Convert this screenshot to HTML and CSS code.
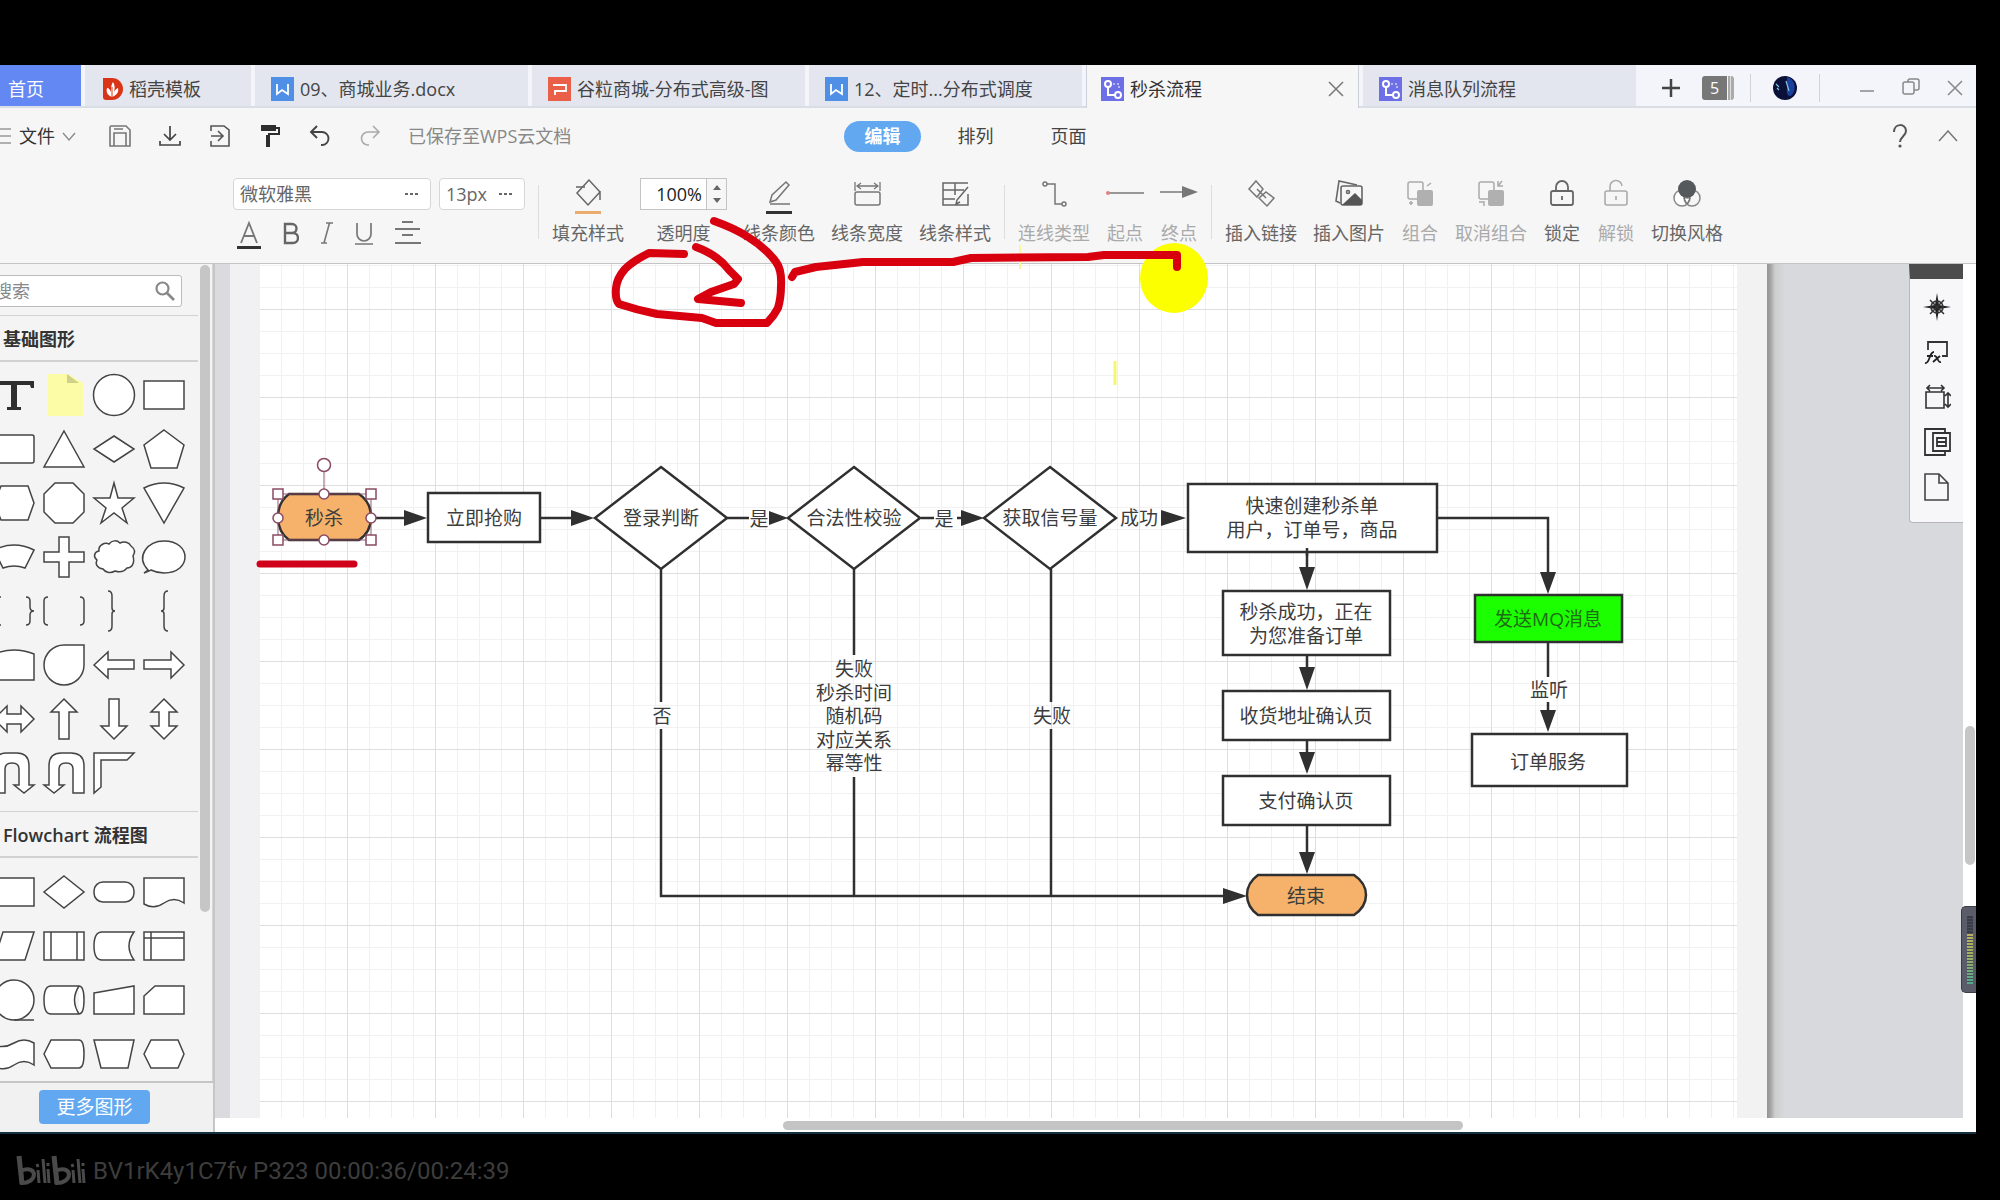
FILE: index.html
```html
<!DOCTYPE html>
<html lang="zh-CN">
<head>
<meta charset="utf-8">
<title>秒杀流程</title>
<link rel="stylesheet" href="styles.css">
</head>
<body>
<main class="app">
  <header class="tabs">
    <button class="tab tab-home">首页</button>
    <button class="tab tab-docer"><svg width="20" height="24" viewBox="0 0 20 24"><path d="M0 1h9a11 11 0 0 1 0 22H3a3 3 0 0 1-3-3z" fill="#d93418"/><path d="M9 20c-5-2-6-5-5-9 2 0 3 2 4 4 0-4 0-7 2-10 2 3 2 6 1 10 1-2 2-3 4-4 1 4-1 7-6 9z" fill="#fff"/><path d="M9 20V10" stroke="#d93418"/></svg>稻壳模板</button>
    <button class="tab"><svg width="23" height="24" viewBox="0 0 23 24"><path d="M0 0h23v24H0z" fill="#4f8fe6"/><path d="M6 7v10l5-4 6 4V7" fill="none" stroke="#fff" stroke-width="1.800"/></svg>09、商城业务.docx</button>
    <button class="tab"><svg width="23" height="24" viewBox="0 0 23 24"><path d="M0 0h23v24H0z" fill="#ea5f48"/><path d="M5 8h13v6H7v4" fill="none" stroke="#fff" stroke-width="1.800"/></svg>谷粒商城-分布式高级-图</button>
    <button class="tab"><svg width="23" height="24" viewBox="0 0 23 24"><path d="M0 0h23v24H0z" fill="#4f8fe6"/><path d="M6 7v10l5-4 6 4V7" fill="none" stroke="#fff" stroke-width="1.800"/></svg>12、定时...分布式调度</button>
    <button class="tab tab-active"><svg width="23" height="24" viewBox="0 0 23 24"><path d="M0 0h23v24H0z" fill="#6d6fe6"/><g fill="none" stroke="#fff" stroke-width="2"><circle cx="7" cy="7" r="3"/><circle cx="17" cy="18" r="3"/><path d="M7 10v8h7"/><path d="M12 7h6v6" stroke-dasharray="2 2" stroke-width="1"/></g></svg>秒杀流程<svg class="tab-close" width="16" height="16" viewBox="0 0 16 16"><path d="M1 1l14 14M15 1L1 15" fill="none" stroke="#777" stroke-width="1.5"/></svg></button>
    <button class="tab"><svg width="23" height="24" viewBox="0 0 23 24"><path d="M0 0h23v24H0z" fill="#6d6fe6"/><g fill="none" stroke="#fff" stroke-width="2"><circle cx="7" cy="7" r="3"/><circle cx="17" cy="18" r="3"/><path d="M7 10v8h7"/><path d="M12 7h6v6" stroke-dasharray="2 2" stroke-width="1"/></g></svg>消息队列流程</button>
    <div class="window-tools">
      <button class="plain" aria-label="新建"><svg width="18" height="18" viewBox="0 0 18 18"><path d="M9 0v18M0 9h18" stroke="#444" stroke-width="2.5"/></svg></button>
      <span class="badge">5</span>
      <span class="rule rule-near"></span>
      <svg width="24" height="24" viewBox="0 0 24 24"><circle cx="12" cy="12" r="12" fill="#0a1038"/><path d="M14 1c8 2 10 12 5 18-4 3-6-2-5-7z" fill="#1b3f9c"/><path d="M13 5l3 10M3 8l3 3M4 12l2 2" stroke="#7fc4dc" stroke-width="1.2"/></svg>
      <span class="rule"></span>
      <button class="plain win-min" aria-label="最小化"><svg width="16" height="18" viewBox="0 0 16 18"><path d="M1 12h14" stroke="#888" stroke-width="1.5"/></svg></button>
      <button class="plain win-key" aria-label="还原"><svg width="18" height="20" viewBox="0 0 18 20"><g fill="none" stroke="#888" stroke-width="1.5"><rect x="1" y="4" width="11" height="12" rx="2"/><path d="M6 4V3a2 2 0 0 1 2-2h7a2 2 0 0 1 2 2v7a2 2 0 0 1-2 2h-3"/></g></svg></button>
      <button class="plain win-key" aria-label="关闭"><svg width="16" height="16" viewBox="0 0 16 16"><path d="M1 1l14 14M15 1L1 15" stroke="#888" stroke-width="1.5"/></svg></button>
    </div>
  </header>

  <nav class="menubar">
    <div class="quick">
      <button class="plain file"><svg width="12" height="18" viewBox="0 0 12 18"><path d="M0 2h11M0 9h11M0 16h11" stroke="#999" stroke-width="1.5"/></svg>文件<svg width="14" height="9" viewBox="0 0 14 9"><path d="M1 1l6 7 6-7" fill="none" stroke="#888" stroke-width="1.3"/></svg></button>
      <div class="quick-icons">
        <svg width="22" height="22" viewBox="0 0 22 22"><g fill="none" stroke="#777" stroke-width="1.6"><path d="M2 1h15l4 4v16H1V2z"/><path d="M5 21V8h12v13M5 4h9"/></g></svg>
        <svg width="22" height="22" viewBox="0 0 22 22"><path d="M11 1v14M5 9l6 6 6-6M1 16v4h20v-4" fill="none" stroke="#444" stroke-width="1.7"/></svg>
        <svg width="22" height="22" viewBox="0 0 22 22"><path d="M2 6V1h13l5 4v16H2v-5M2 11h11M9 6l5 5-5 5" fill="none" stroke="#555" stroke-width="1.6"/></svg>
        <svg width="22" height="24" viewBox="0 0 22 24"><path d="M2 1h15v6H2z" fill="#2d2d2d"/><path d="M17 4h3v6H10v13" fill="none" stroke="#2d2d2d" stroke-width="2"/><path d="M7 11h4v12H7z" fill="#2d2d2d"/></svg>
        <svg width="22" height="22" viewBox="0 0 22 22"><path d="M8 1L2 7l6 6M2 7h11a6.500 6.500 0 0 1 0 13h-1" fill="none" stroke="#444" stroke-width="1.9"/></svg>
        <svg width="22" height="22" viewBox="0 0 22 22"><path d="M14 1l6 6-6 6M20 7H9a6.500 6.500 0 0 0 0 13h1" fill="none" stroke="#aaa" stroke-width="1.6"/></svg>
      </div>
      <span class="saved">已保存至WPS云文档</span>
    </div>
    <button class="pill pill-on">编辑</button>
    <button class="pill">排列</button>
    <button class="pill">页面</button>
    <div class="help">
      <button class="plain" aria-label="帮助"><svg width="16" height="26" viewBox="0 0 16 26"><path d="M2 9c0-9 12-9 12-1 0 5-6 6-6 11" fill="none" stroke="#555" stroke-width="2"/><circle cx="8" cy="23" r="1.600" fill="#555"/></svg></button>
      <button class="plain" aria-label="收起"><svg width="20" height="12" viewBox="0 0 20 12"><path d="M1 11l9-10 9 10" fill="none" stroke="#777" stroke-width="1.5"/></svg></button>
    </div>
  </nav>

  <section class="toolbar">
    <div class="font-tools">
      <div class="font-row">
        <button class="picker picker-font"><span>微软雅黑</span><svg width="14" height="4" viewBox="0 0 14 4"><path d="M1 1h3v2H1zM6 1h3v2H6zM11 1h3v2h-3z" fill="#666"/></svg></button>
        <button class="picker picker-size"><span>13px</span><svg width="14" height="4" viewBox="0 0 14 4"><path d="M1 1h3v2H1zM6 1h3v2H6zM11 1h3v2h-3z" fill="#666"/></svg></button>
      </div>
      <div class="font-row format-row">
        <svg width="24" height="30" viewBox="0 0 24 30"><path d="M4 22L12 2l8 20M7 15h10" fill="none" stroke="#777" stroke-width="1.8"/><path d="M0 25h24v3H0z" fill="#333"/></svg>
        <svg width="16" height="30" viewBox="0 0 16 30"><path d="M2 3h7a4.500 4.500 0 0 1 0 9H2zM2 12h8a5 5 0 0 1 0 10H2z" fill="none" stroke="#666" stroke-width="2.400"/></svg>
        <svg width="12" height="30" viewBox="0 0 12 30"><path d="M5 2h7M0 22h6M8.500 2L3 22" fill="none" stroke="#777" stroke-width="1.600"/></svg>
        <svg width="18" height="30" viewBox="0 0 18 30"><path d="M2 2v11a7 7 0 0 0 14 0V2M0 23h18" fill="none" stroke="#777" stroke-width="1.700"/></svg>
        <svg width="26" height="30" viewBox="0 0 26 30"><path d="M7 1h11M0 8h25M7 14h11M0 22h26" fill="none" stroke="#777" stroke-width="1.800"/></svg>
      </div>
    </div>
    <span class="split"></span>
    <button class="tool"><svg width="30" height="36" viewBox="0 0 30 36"><path d="M16 2L4 15l11 12 12-13zM3 9h9M27 13v9" fill="none" stroke="#666" stroke-width="1.500"/><path d="M2 33h26v3H2z" fill="#e9ac6c"/></svg>填充样式</button>
    <div class="tool opacity"><div class="spin"><input id="opacity" type="text" value="100%"><span class="spin-keys"><svg width="8" height="18" viewBox="0 0 8 18"><path d="M0 5l4-5 4 5zM0 13l4 5 4-5z" fill="#666"/></svg></span></div><label for="opacity">透明度</label></div>
    <button class="tool"><svg width="30" height="36" viewBox="0 0 30 36"><path d="M6 24l2-7L22 4l3 3-13 15zM6 26h20" fill="none" stroke="#777" stroke-width="1.500"/><path d="M2 33h26v3H2z" fill="#333"/></svg>线条颜色</button>
    <button class="tool"><svg width="30" height="36" viewBox="0 0 30 36"><rect x="3" y="14" width="25" height="13" rx="2" fill="none" stroke="#777" stroke-width="1.500"/><path d="M3 4v9M28 4v9M5 8h21M9 5L5 8l4 3M22 5l4 3-4 3" fill="none" stroke="#777" stroke-width="1.300"/></svg>线条宽度</button>
    <button class="tool"><svg width="30" height="36" viewBox="0 0 30 36"><path d="M28 5H3v22h25V16M3 12h21M3 21h12M15 5v12M28 9L17 22l-1 4 4-2" fill="none" stroke="#666" stroke-width="1.500"/></svg>线条样式</button>
    <span class="split"></span>
    <button class="tool dim" disabled><svg width="30" height="36" viewBox="0 0 30 36"><g fill="none" stroke="#777" stroke-width="1.500"><circle cx="6" cy="6" r="2"/><circle cx="25" cy="26" r="2"/><path d="M8 6h8v20h7"/></g></svg>连线类型</button>
    <button class="tool dim" disabled><svg width="38" height="36" viewBox="0 0 38 36"><path d="M1 15h37" stroke="#777" stroke-width="1.500"/><circle cx="2" cy="15" r="2" fill="#e08080"/></svg>起点</button>
    <button class="tool dim" disabled><svg width="38" height="36" viewBox="0 0 38 36"><path d="M0 14h24" stroke="#777" stroke-width="1.500"/><path d="M22 8l16 6-16 6z" fill="#777"/></svg>终点</button>
    <span class="split"></span>
    <button class="tool"><svg width="30" height="36" viewBox="0 0 30 36"><g fill="none" stroke="#777" stroke-width="1.500"><path d="M10 3l7 8-6 8-8-8zM20 14l8 6-7 8-8-8zM11 11l9 9"/></g></svg>插入链接</button>
    <button class="tool"><svg width="30" height="36" viewBox="0 0 30 36"><g fill="none" stroke="#666" stroke-width="1.600"><path d="M6 25l-4-2L5 3l18 4"/><rect x="7" y="8" width="21" height="19" rx="2"/><circle cx="14" cy="14" r="1.500"/></g><path d="M8 27l13-12 7 7v5z" fill="#555"/></svg>插入图片</button>
    <button class="tool dim" disabled><svg width="30" height="36" viewBox="0 0 30 36"><rect x="3" y="4" width="15" height="17" rx="2" fill="none" stroke="#aaa" stroke-width="1.500"/><rect x="12" y="12" width="16" height="16" rx="2" fill="#b0b0b0"/><path d="M22 8l4-3M6 23v4M4 25h4" stroke="#aaa" stroke-width="1.500"/></svg>组合</button>
    <button class="tool dim" disabled><svg width="30" height="36" viewBox="0 0 30 36"><rect x="3" y="4" width="15" height="17" rx="2" fill="none" stroke="#aaa" stroke-width="1.500"/><rect x="12" y="12" width="16" height="16" rx="2" fill="#b0b0b0"/><path d="M22 3v5h5M26 3l-4 5M3 24h5v4" fill="none" stroke="#aaa" stroke-width="1.500"/></svg>取消组合</button>
    <button class="tool"><svg width="30" height="36" viewBox="0 0 30 36"><g fill="none" stroke="#666" stroke-width="1.800"><rect x="4" y="13" width="22" height="14" rx="2"/><path d="M9 13V9a6 6 0 0 1 12 0v4M15 18v4"/></g></svg>锁定</button>
    <button class="tool dim" disabled><svg width="30" height="36" viewBox="0 0 30 36"><g fill="none" stroke="#aaa" stroke-width="1.600"><rect x="4" y="13" width="22" height="14" rx="2"/><path d="M9 13V9a6 6 0 0 1 12-1M15 18v4"/></g></svg>解锁</button>
    <button class="tool"><svg width="30" height="36" viewBox="0 0 30 36"><g fill="#fff" stroke="#888" stroke-width="1.500"><circle cx="10" cy="20" r="8"/><circle cx="20" cy="20" r="8" fill-opacity="0"/></g><circle cx="15" cy="11" r="9" fill="#56595c"/><path d="M12 20l3 6 3-6z" fill="#fff" stroke="#666"/></svg>切换风格</button>
  </section>

  <div class="workspace">
    <aside class="sidebar">
      <div class="shelf">
        <div class="search"><input type="text" placeholder="搜索" aria-label="搜索"><svg width="20" height="20" viewBox="0 0 20 20"><circle cx="7.500" cy="7.500" r="6" fill="none" stroke="#888" stroke-width="2.200"/><path d="M12 12l7 7" stroke="#888" stroke-width="2.600"/></svg></div>
        <h2>基础图形</h2>
        <div class="shapes">
          <svg viewBox="0 0 42 42"><path d="M2 7h39v7h-3l-1-3H24v22h4v3H14v-3h4V11H2z" class="ink"/></svg>
          <svg viewBox="0 0 42 42"><path d="M5 0h20l15 9v33H5z" fill="#fcfca6"/><path d="M24 0v9h12z" fill="#cfd08a"/></svg>
          <svg viewBox="0 0 42 42"><circle cx="21" cy="21" r="20.500"/></svg>
          <svg viewBox="0 0 42 42"><path d="M1 7h40v28H1z"/></svg>
          <svg viewBox="0 0 42 42"><rect x="1" y="7" width="40" height="28" rx="2"/></svg>
          <svg viewBox="0 0 42 42"><path d="M21 3l20 36H1z"/></svg>
          <svg viewBox="0 0 42 42"><path d="M21 8l20 13-20 13L1 21z"/></svg>
          <svg viewBox="0 0 42 42"><path d="M21 2l20 15-7 23H8L1 17z"/></svg>
          <svg viewBox="0 0 42 42"><path d="M8 4h27l6 17-6 17H8L1 21z"/></svg>
          <svg viewBox="0 0 42 42"><path d="M12 1h18l11 11v18L30 41H12L1 30V12z"/></svg>
          <svg viewBox="0 0 42 42"><path d="M21 1l4 15h16L29 26l5 15-13-10L8 41l5-15L1 16h16z"/></svg>
          <svg viewBox="0 0 42 42"><path d="M1 6q20-10 40 0L21 41z"/></svg>
          <svg viewBox="0 0 42 42"><path d="M1 14q20-10 40 0l-9 18q-11-4-22 0z"/></svg>
          <svg viewBox="0 0 42 42"><path d="M16 1h10v15h15v10H26v15H16V26H1V16h15z"/></svg>
          <svg viewBox="0 0 42 42"><path d="M6 15c-1-6 6-9 10-7 3-4 8-4 11-1 4-2 9-1 11 3 4 3 4 7 2 10 2 7-1 12-6 12-4 5-9 4-12 3-5 3-10 1-12-2-6-1-8-5-6-9-4-3-3-8 2-9z"/></svg>
          <svg viewBox="0 0 42 42"><path d="M1 37l4-3c-13-14 0-29 16-29 28 0 28 32 0 32-6 0-9-1-13-3z"/></svg>
          <svg viewBox="0 0 42 42" class="open"><path d="M8 7q-4 0-4 4v6q0 4-3 4 3 0 3 4v6q0 4 4 4M33 7q4 0 4 4v6q0 4 4 4-4 0-4 4v6q0 4-4 4"/></svg>
          <svg viewBox="0 0 42 42" class="open"><path d="M5 7q-4 0-4 4v20q0 4 4 4M37 7q4 0 4 4v20q0 4-4 4"/></svg>
          <svg viewBox="0 0 42 42" class="open"><path d="M15 1q4 0 4 5v12q0 3 3 3-3 0-3 3v12q0 5-4 5"/></svg>
          <svg viewBox="0 0 42 42" class="open"><path d="M25 1q-4 0-4 5v12q0 3-3 3 3 0 3 3v12q0 5 4 5"/></svg>
          <svg viewBox="0 0 42 42"><path d="M1 10q20-8 40 0v26H1z"/></svg>
          <svg viewBox="0 0 42 42"><path d="M21 1h20v20A20 20 0 1 1 21 1z"/></svg>
          <svg viewBox="0 0 42 42"><path d="M1 21L15 8v8h26v9H15v9z"/></svg>
          <svg viewBox="0 0 42 42"><path d="M41 21L28 8v8H1v9h27v9z"/></svg>
          <svg viewBox="0 0 42 42"><path d="M1 21L14 8v8h14V8l13 13-13 13v-8H14v8z"/></svg>
          <svg viewBox="0 0 42 42"><path d="M21 1l13 13h-8v27H16V14H8z"/></svg>
          <svg viewBox="0 0 42 42"><path d="M21 41l13-13h-8V1H16v27H8z"/></svg>
          <svg viewBox="0 0 42 42"><path d="M21 1l13 13h-8v14h8L21 41 8 28h8V14H8z"/></svg>
          <svg viewBox="0 0 42 42"><path d="M1 41V14Q1 1 14 1h10q12 0 12 13v19h5l-10 8-10-8h5V17q0-6-7-6t-7 6v24z"/></svg>
          <svg viewBox="0 0 42 42"><path d="M41 41V14Q41 1 28 1H18Q6 1 6 14v19H1l10 8 10-8h-5V17q0-6 7-6t7 6v24z"/></svg>
          <svg viewBox="0 0 42 42"><path d="M1 1h40l-7 7H8v27l-7 6z"/></svg>
        </div>
        <h2>Flowchart 流程图</h2>
        <div class="shapes shapes-flow">
          <svg viewBox="0 0 42 42"><path d="M1 7h40v28H1z"/></svg>
          <svg viewBox="0 0 42 42"><path d="M21 5l20 16-20 16L1 21z"/></svg>
          <svg viewBox="0 0 42 42"><rect x="1" y="11" width="40" height="20" rx="9"/></svg>
          <svg viewBox="0 0 42 42"><path d="M1 7h40v25q-10-7-20 0t-20 1z"/></svg>
          <svg viewBox="0 0 42 42"><path d="M10 7h31l-9 28H1z"/></svg>
          <svg viewBox="0 0 42 42"><path d="M1 7h40v28H1zM8 7v28M34 7v28"/></svg>
          <svg viewBox="0 0 42 42"><path d="M41 7q-10 14 0 28H9Q1 35 1 21T9 7z"/></svg>
          <svg viewBox="0 0 42 42"><path d="M1 7h40v28H1zM8 7v28M1 13h40"/></svg>
          <svg viewBox="0 0 42 42"><circle cx="21" cy="21" r="20"/><path d="M21 41h20"/></svg>
          <svg viewBox="0 0 42 42"><path d="M8 7h28q5 0 5 14t-5 14H8Q1 35 1 21T8 7zM36 7q-9 14 0 28"/></svg>
          <svg viewBox="0 0 42 42"><path d="M1 14l40-7v28H1z"/></svg>
          <svg viewBox="0 0 42 42"><path d="M12 7h29v28H1V17z"/></svg>
          <svg viewBox="0 0 42 42"><path d="M1 12q10 4 20-2t20 0v22q-10-7-20 0t-20 1z"/></svg>
          <svg viewBox="0 0 42 42"><path d="M8 7h28q5 0 5 14t-5 14H8L1 21z"/></svg>
          <svg viewBox="0 0 42 42"><path d="M1 7h40l-6 28H8z"/></svg>
          <svg viewBox="0 0 42 42"><path d="M8 7h27l6 14-6 14H8L1 21z"/></svg>
        </div>
        <span class="shelf-thumb"></span>
      </div>
      <div class="more"><button>更多图形</button></div>
    </aside>

    <section class="stage">
      <div class="board">
        <div class="edge-left"></div>
        <div class="page">
          <svg class="diagram" width="1477" height="854" viewBox="260 264 1477 854">
            <g class="wire">
              <path d="M371 518h34M540 518h32M727 518h22M921 518h13M957 518h6M1437 518h111v55M1307 548v20M1307 655v13M1307 740v13M1307 825v28"/>
              <path d="M661 569v133M661 729v167h563M854 569v86M854 777v119M1051 569v133M1051 729v167M1548 642v35M1548 702v10"/>
            </g>
            <g class="head">
              <path d="M404 510l23 8-23 8zM571 510l23 8-23 8zM769 511l19 7-19 7zM961 510l23 8-23 8zM1161 510l25 8-25 8zM1223 888l24 8-24 8z"/>
              <path d="M1299 567h16l-8 23zM1299 667h16l-8 23zM1299 752h16l-8 22zM1299 852h16l-8 22zM1540 572h16l-8 22zM1540 710h16l-8 22z"/>
            </g>
            <g class="node">
              <rect x="428" y="493" width="112" height="49"/>
              <path d="M661 467l66 51-66 51-66-51zM854 467l66 51-66 51-66-51zM1050 467l66 51-66 51-66-51z"/>
              <rect x="1188" y="484" width="249" height="68"/>
              <rect x="1223" y="591" width="167" height="64"/>
              <rect x="1223" y="691" width="167" height="49"/>
              <rect x="1223" y="776" width="167" height="49"/>
              <rect x="1475" y="595" width="147" height="47" class="green"/>
              <rect x="1472" y="734" width="155" height="52"/>
              <path class="orange" d="M1258 875h96q12 8 12 20t-12 20h-96q-11-8-11-20t11-20z"/>
              <path class="orange" d="M289 494h70q12 8 12 23t-12 23h-70q-11-8-11-23t11-23z"/>
            </g>
            <path class="wire" d="M1307 548v8"/>
            <g class="handle">
              <path d="M324 471v18M278 494h93v46h-93z" fill="none" stroke-opacity=".6"/>
              <path d="M273 489h10v10h-10zM366 489h10v10h-10zM273 535h10v10h-10zM366 535h10v10h-10z"/>
              <circle cx="324" cy="465" r="6.500"/><circle cx="324" cy="494" r="5"/><circle cx="324" cy="540" r="5"/><circle cx="278" cy="518" r="5"/><circle cx="371" cy="518" r="5"/>
            </g>
            <g class="caption">
              <text x="324" y="525">秒杀</text><text x="484" y="525">立即抢购</text><text x="661" y="525">登录判断</text><text x="759" y="526">是</text>
              <text x="854" y="525">合法性校验</text><text x="944" y="526">是</text><text x="1050" y="525">获取信号量</text><text x="1139" y="525">成功</text>
              <text x="1312" y="513">快速创建秒杀单</text><text x="1312" y="537">用户，订单号，商品</text>
              <text x="1306" y="619">秒杀成功，正在</text><text x="1306" y="643">为您准备订单</text>
              <text x="1306" y="723">收货地址确认页</text><text x="1306" y="808">支付确认页</text><text x="1306" y="903">结束</text>
              <text x="1548" y="626" class="on-green">发送MQ消息</text><text x="1549" y="697">监听</text><text x="1548" y="769">订单服务</text>
              <text x="662" y="723">否</text><text x="1052" y="723">失败</text>
              <text x="854" y="676">失败</text><text x="854" y="700">秒杀时间</text><text x="854" y="723">随机码</text><text x="854" y="747">对应关系</text><text x="854" y="770">幂等性</text>
            </g>
            <path d="M260 564h94" stroke="#d0021b" stroke-width="7" stroke-linecap="round"/>
          </svg>
        </div>
        <div class="edge-right"></div>
        <div class="desk"></div>
        <div class="gutter"><span class="v-thumb"></span></div>
      </div>
      <div class="track"><span class="h-thumb"></span></div>
      <div class="dock">
        <svg width="28" height="28" viewBox="0 0 28 28"><path d="M14 0l2 12 12 2-12 2-2 12-2-12-12-2 12-2z" fill="#222"/><circle cx="14" cy="14" r="6" fill="none" stroke="#333" stroke-width="1.600"/><path d="M7 7l14 14M21 7L7 21" stroke="#333" stroke-width="1.500"/></svg>
        <svg width="28" height="28" viewBox="0 0 28 28"><path d="M5 12V4h19v14h-5" fill="none" stroke="#333" stroke-width="1.800"/><path d="M2 25c5 1 4-11 9-11M4 18h6M11 18c4-1 3 7 7 6M17 18l-7 6" fill="none" stroke="#222" stroke-width="1.800"/></svg>
        <svg width="28" height="28" viewBox="0 0 28 28"><path d="M3 9h18v16H3zM4 5h17M7 2L4 5l3 3M18 2l3 3-3 3M25 10v14M22 13l3-3 3 3M22 21l3 3 3-3" fill="none" stroke="#333" stroke-width="1.600"/></svg>
        <svg width="28" height="28" viewBox="0 0 28 28"><path d="M22 5V1H2v26h20v-4M10 5h17v18H10zM14 10h9v8h-9zM14 14h9" fill="none" stroke="#333" stroke-width="1.800"/></svg>
        <svg width="28" height="28" viewBox="0 0 28 28"><path d="M2 1h14l9 9v17H2zM16 1v9h9" fill="none" stroke="#444" stroke-width="1.600"/></svg>
      </div>
      <div class="meter"><span></span></div>
    </section>
  </div>

  <svg class="ink-layer" width="640" height="220" viewBox="600 200 640 220">
    <ellipse cx="1174" cy="278" rx="34" ry="35" fill="#fbff00"/>
    <path d="M1115 361v24" stroke="#f4f870" stroke-width="3"/><path d="M1020 245v24" stroke="#f8f8a0" stroke-width="2"/>
    <g fill="none" stroke="#d8000f" stroke-width="8" stroke-linecap="round" stroke-linejoin="round">
      <path d="M714 221q20 7 34 16 19 12 28 25 6 8 5 24 0 12-3 22-4 8-11 15h-51l-14-5-45-4q-20-4-38-10-4-4-3-16 1-10 9-19 8-8 24-16l35 1"/>
      <path d="M696 247q22 8 33 23l9 9-4 5-23 8-13 7 43 4"/>
      <path d="M792 277l3-5 21-5 47-5h90l18-4 117-1 16-2h73v12"/>
    </g>
  </svg>
</main>

<footer class="watermark">
  <svg width="70" height="34" viewBox="0 0 70 34" role="img" aria-label="bilibili">
    <g fill="none" stroke="#4a4a4a">
      <path d="M3 2l3 28" stroke-width="5"/><path d="M5 17c6-3 12-2 13 3 0 6-6 9-12 9z" stroke-width="4"/>
      <path d="M22 16l1 13M27 5l2 24M32 15l1 14M21 10l1 3M32 9v3" stroke-width="3"/>
      <path d="M38 2l3 28" stroke-width="5"/><path d="M40 17c6-3 12-2 13 3 0 6-6 9-12 9z" stroke-width="4"/>
      <path d="M57 16l1 13M62 5l2 24M67 15l1 14M56 10l1 3M67 9v3" stroke-width="3"/>
    </g>
  </svg>
  <span>BV1rK4y1C7fv P323 00:00:36/00:24:39</span>
</footer>
</body>
</html>
```
FILE: styles.css
```css
* { box-sizing: border-box; }

body {
  margin: 0;
  min-height: 100vh;
  padding-top: 65px;
  display: flex;
  flex-direction: column;
  background: #000;
  color: #444;
  font: 18px/24px "Open Sans", "Noto Sans CJK SC", sans-serif;
  overflow-x: hidden;
}

svg { display: block; flex: none; }
button, input { font: inherit; color: inherit; }
button { border: 0; padding: 0; background: none; white-space: nowrap; }

.app {
  position: relative;
  flex: 1;
  display: flex;
  flex-direction: column;
  margin-right: 24px;
  background: #f6f6f6;
  border-bottom: 2px solid #16303f;
}

/* document tabs */
.tabs {
  display: flex;
  gap: 4px;
  height: 43px;
  background: #f3f5fa;
  border-bottom: 2px solid #d9dde6;
}
.tab {
  flex: 0 1 273px;
  display: flex;
  align-items: center;
  gap: 6px;
  padding: 6px 16px 0;
  background: #e3e6ef;
}
.tab-home { flex-basis: 81px; padding-left: 8px; background: #6388f3; color: #fff; }
.tab-docer { flex-basis: 166px; padding-left: 18px; }
.tab-active {
  margin-bottom: -2px;
  padding: 6px 14px 2px;
  border-left: 1px solid #ccd0da;
  border-right: 1px solid #ccd0da;
  background: #f6f6f6;
  color: #333;
}
.tab-close { margin-left: auto; }

.window-tools {
  flex: 1;
  display: flex;
  align-items: center;
  justify-content: flex-end;
  gap: 22px;
  padding: 4px 13px 0 0;
}
.plain { display: flex; align-items: center; }
.badge {
  width: 32px;
  height: 24px;
  padding-left: 8px;
  background: linear-gradient(90deg, #777 25px, #f3f5fa 25px 26px, #aaa 26px 28px, #ddd 28px 29px, #aaa 29px);
  border-radius: 3px;
  color: #fff;
  font-size: 16px;
}
.rule { width: 1px; height: 28px; background: #d0d3da; }
.rule-near { margin-left: -6px; }
.win-min { margin-left: 17px; }
.win-key { margin-left: 5px; }

/* menu line */
.menubar { display: flex; align-items: center; height: 56px; }
.quick { display: flex; align-items: center; width: 844px; color: #333; }
.file { gap: 7px; width: 109px; }
.quick-icons { display: flex; align-items: center; gap: 28px; }
.saved { margin-left: 27px; color: #888; }
.pill { width: 77px; height: 31px; margin-right: 16px; border-radius: 16px; color: #444; }
.pill-on { background: #62a8f0; color: #fff; font-weight: 600; }
.help { display: flex; align-items: center; gap: 30px; margin-left: auto; padding-right: 18px; }

/* tool ribbon */
.toolbar {
  display: flex;
  align-items: flex-start;
  gap: 16px;
  height: 100px;
  padding: 14px 0 0 233px;
  border-bottom: 1px solid #c4c4c4;
  color: #666;
}
.font-row { display: flex; gap: 8px; }
.format-row { gap: 22px; padding: 11px 0 0 4px; }
.picker {
  display: flex;
  align-items: center;
  justify-content: space-between;
  height: 32px;
  padding: 0 12px 0 6px;
  background: #fff;
  border: 1px solid #d6d6d6;
  border-radius: 4px;
}
.picker-font { width: 198px; }
.picker-size { width: 86px; }
.split { width: 1px; height: 54px; margin: 7px -3px 0; background: #ddd; }
.tool {
  display: flex;
  flex-direction: column;
  align-items: center;
  gap: 7px;
  min-width: 38px;
}
.dim { color: #aaa; }
.opacity { width: 87px; }
.spin { display: flex; height: 36px; padding-bottom: 4px; }
.spin input {
  width: 67px;
  height: 32px;
  padding: 0 4px 0 0;
  border: 1px solid #c4c4c4;
  background: #fff;
  color: #222;
  text-align: right;
}
.spin-keys {
  display: flex;
  align-items: center;
  justify-content: center;
  width: 20px;
  border: 1px solid #c4c4c4;
  border-left: 0;
}

/* work area */
.workspace { flex: 1; display: flex; }
.sidebar {
  display: flex;
  flex-direction: column;
  width: 215px;
  background: #f4f4f4;
  border-right: 2px solid #c6c6c6;
  overflow: hidden;
}
.shelf { position: relative; flex: 1; padding-right: 14px; border-right: 1px solid #d6d6d6; }
.search {
  display: flex;
  align-items: center;
  height: 32px;
  margin: 11px 16px 8px -14px;
  padding: 0 6px 0 7px;
  background: #fff;
  border: 1px solid #bbb;
  border-radius: 3px;
}
.search input { flex: 1; min-width: 0; padding: 0; border: 0; outline: 0; background: none; }
.search input::placeholder { color: #888; opacity: 1; }
.shelf h2 {
  height: 47px;
  margin: 0;
  padding: 11px 3px 0;
  border-top: 1px solid #d2d2d2;
  border-bottom: 2px solid #d2d2d2;
  color: #333;
  font: 600 18px/24px "Open Sans", "Noto Sans CJK SC", sans-serif;
}
.shapes {
  display: grid;
  grid-template-columns: repeat(4, 42px);
  grid-auto-rows: 42px;
  gap: 12px 8px;
  margin-left: -7px;
  padding: 12px 0 17px;
  fill: #fff;
  stroke: #444;
  stroke-width: 1.5;
}
.shapes svg { overflow: visible; }
.shapes-flow { padding: 13px 0 5px; }
.shapes path[fill] { stroke: none; }
.ink { fill: #2f2f2f; stroke: none; }
.open { fill: none; }
.shelf-thumb {
  position: absolute;
  top: 1px;
  right: 2px;
  width: 10px;
  height: 647px;
  border-radius: 5px;
  background: #c6c6c6;
}
.more {
  height: 51px;
  padding: 7px 0 0 39px;
  border-top: 2px solid #c6c6c6;
  background: #f1f1f1;
}
.more button {
  width: 111px;
  height: 34px;
  border-radius: 4px;
  background: #62a8f0;
  color: #fff;
  font-size: 19px;
}

.stage { position: relative; flex: 1; min-width: 0; display: flex; flex-direction: column; background: #fff; }
.board { flex: 1; display: flex; min-width: 0; overflow: hidden; }
.edge-left { flex: none; width: 45px; background: linear-gradient(90deg, #dbdbdf 15px, #f1f1f3 15px); }
.page {
  flex: 1;
  min-width: 0;
  background:
    linear-gradient(#dedede 1px, transparent 1px) 0 45px / 88px 88px,
    linear-gradient(90deg, #dedede 1px, transparent 1px) 87px 0 / 88px 88px,
    linear-gradient(#f1f1f1 1px, transparent 1px) 0 1px / 22px 22px,
    linear-gradient(90deg, #f1f1f1 1px, transparent 1px) 21px 0 / 22px 22px,
    #fff;
}
.diagram { overflow: visible; }
.edge-right { flex: none; width: 30px; background: #f2f2f2; }
.desk { flex: none; width: 196px; background: linear-gradient(90deg, #929292, #a8a8a8 4px, #cecece 8px, #d8d9dc 18px); }
.gutter { position: relative; flex: none; width: 13px; }
.v-thumb {
  position: absolute;
  top: 462px;
  left: 2px;
  width: 10px;
  height: 139px;
  border-radius: 5px;
  background: #c6c6c6;
}
.track { height: 14px; padding: 3px 0 0 568px; }
.h-thumb { display: block; width: 680px; height: 9px; border-radius: 5px; background: #c4c4c4; }

.wire { fill: none; stroke: #303030; stroke-width: 2.5; }
.head { fill: #303030; }
.node { fill: #fff; stroke: #303030; stroke-width: 2.5; }
.green { fill: #1cff00; }
.orange { fill: #f6b26b; }
.handle { fill: #fff; stroke: #8a4a63; stroke-width: 1.5; }
.caption { fill: #3c3c3c; font-size: 19px; text-anchor: middle; }
.on-green { fill: #1f6a14; }

.dock {
  position: absolute;
  top: 0;
  right: 13px;
  display: flex;
  flex-direction: column;
  align-items: center;
  gap: 17px;
  width: 54px;
  height: 259px;
  padding-top: 14px;
  border: 1px solid #b8b8bc;
  border-top: 15px solid #4c4c4c;
  border-right: 0;
  border-bottom-left-radius: 4px;
  background: #f7f7fa;
}
.meter {
  position: absolute;
  top: 642px;
  right: 0;
  width: 15px;
  height: 87px;
  padding: 9px 3px 8px 5px;
  border: 1px solid #3a3c48;
  border-right: 0;
  border-radius: 5px 0 0 5px;
  background: #5a5c6a;
}
.meter span {
  display: block;
  height: 68px;
  background:
    repeating-linear-gradient(transparent 0 2px, #4a4d5a 2px 3px),
    linear-gradient(#3a3c48 17px, #b8b060 18px, #a0b060 40px, #50a890);
}

.ink-layer { position: absolute; left: 600px; top: 135px; pointer-events: none; }

.watermark {
  display: flex;
  align-items: center;
  gap: 7px;
  height: 66px;
  padding: 8px 16px 0;
  color: #3d3d3d;
  font: 24px/32px Roboto, sans-serif;
}
```
